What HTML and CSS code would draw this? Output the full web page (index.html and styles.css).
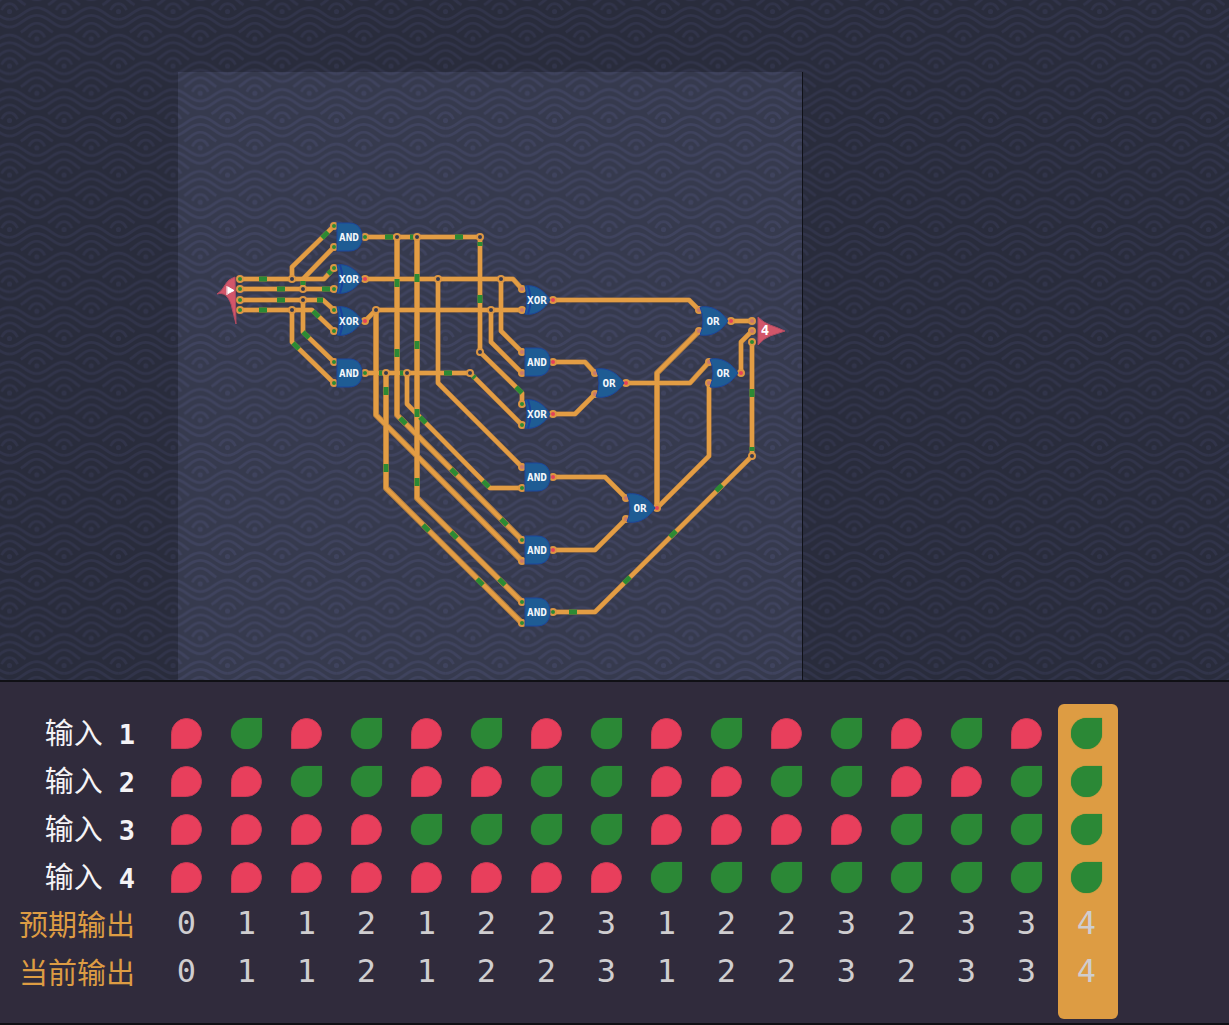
FILE: index.html
```html
<!DOCTYPE html>
<html lang="zh-CN">
<head>
<meta charset="utf-8">
<meta name="viewport" content="width=device-width, initial-scale=1">
<title>电路</title>
<link rel="stylesheet" href="styles.css">
</head>
<body>
<svg class="stage" role="img" aria-label="电路图">
  <defs>
    <g id="waves" fill="none" stroke-width="2.700">
      <circle r="1.2"/>
      <path d="M-8-1.5Q-5-7.8 0-7.8T8-1.5"/>
      <path d="M-16-6.5C-10-10-7-15.6 0-15.6S10-10 16-6.5"/>
      <path d="M-27.3-19.4C-16-19.4-12-31.1 0-31.1S16-19.4 27.3-19.4"/>
      <path d="M-27.3-11.7C-16-11.7-12-23.4 0-23.4S16-11.7 27.3-11.7"/>
    </g>
    <g id="tile">
      <use href="#waves"/><use href="#waves" x="54.5"/>
      <use href="#waves" y="54.5"/><use href="#waves" x="54.5" y="54.5"/>
      <use href="#waves" x="27.25" y="27.25"/><use href="#waves" x="27.25" y="81.75"/>
    </g>
    <pattern id="sea-dark" x="200.3" y="93.3" width="54.5" height="54.5" patternUnits="userSpaceOnUse">
      <use href="#tile" class="sea-dark"/>
    </pattern>
    <pattern id="sea-light" x="200.3" y="93.3" width="54.5" height="54.5" patternUnits="userSpaceOnUse">
      <use href="#tile" class="sea-light"/>
    </pattern>
    <g id="AND"><path class="gate" d="M-12-14H0C9-14 13-8 13 0S9 14 0 14H-12Z"/></g>
    <g id="XOR"><path class="gate" d="M-12-14C-2-16 8-9 13 0C8 9-2 16-12 14Q-8 0-12-14Z"/><path class="gate-bar" d="M-9-14Q-4 0-9 14"/></g>
    <g id="OR"><path class="gate" d="M-13-14C0-16 9-9 15 0C9 9 0 16-13 14Q-7 0-13-14Z"/></g>
  </defs>

  <rect class="ground" width="100%" height="100%"/>
  <rect fill="url(#sea-dark)" width="100%" height="100%"/>
  <rect class="board" x="178" y="72" width="624" height="100%"/>
  <rect fill="url(#sea-light)" x="178" y="72" width="624" height="100%"/>
  <rect class="board-edge" x="802" y="72" width="1" height="100%"/>

  <g id="wires"></g>
  <g id="pulses"></g>
  <g id="ports"></g>
  <g id="gates"></g>

  <path class="terminal" d="M217 294Q222 291 225 285T235 277L236 324Q233 312 231 304C228 296 224 292 217 294Z"/>
  <path class="flag" d="M227 286V295M228 287L234 290.500L228 293.500Z"/>
  <path class="terminal" d="M758 317Q764 323 770 325T785 331Q776 334 770 336T758 345Z"/>
  <text class="terminal-text" x="765" y="335">4</text>
</svg>

<main class="panel">
  <table class="truth">
    <colgroup><col class="col-name"><col span="16" class="col-value"></colgroup>
    <tbody id="rows"></tbody>
  </table>
</main>
<script src="script.js"></script>
</body>
</html>
```
FILE: styles.css
```css
* { box-sizing: border-box; }

body {
  margin: 0;
  min-height: 100vh;
  display: flex;
  flex-direction: column;
  background: #302b3c;
  font-family: "Noto Sans CJK SC", sans-serif;
}

/* circuit canvas */
.stage {
  display: block;
  flex: 1 0 640px;
  width: 100%;
}
.ground { fill: #292c3c; }
.sea-dark { stroke: #31344a; }
.board { fill: #363a4e; }
.sea-light { stroke: #3f435e; }
.board-edge { fill: #101118; }

.wire-edge, .wire, .pulse { fill: none; stroke-linejoin: round; }
.wire-edge { stroke: #b57f3f; stroke-width: 5; }
.wire { stroke: #e39d44; stroke-width: 4; }
.wire-edge.trunk { stroke-width: 6; }
.pulse { stroke: #2c8a34; stroke-width: 5; }

.port { stroke: #dc9643; stroke-width: 2; }
.port-on { fill: #2c8a34; }
.port-off { fill: #e4405a; }
.port-dim { fill: #c8786c; }
.port-joint { fill: #363a4e; }

.gate { fill: #1e5c94; stroke: #1d459a; stroke-width: 1; }
.gate-bar { fill: none; stroke: #1a419b; stroke-width: 2; }
.gate-text {
  fill: #f2f6fa;
  font: bold 11px "DejaVu Sans Mono", monospace;
  text-anchor: middle;
}
.terminal { fill: #d2566a; stroke: #b24b62; stroke-width: 1; }
.terminal-text {
  fill: #fff;
  font: bold 14px "DejaVu Sans Mono", monospace;
  text-anchor: middle;
}
.flag { fill: #fff; stroke: #fff; stroke-width: 1; }

/* truth table */
.panel {
  border-top: 2px solid #101015;
  border-bottom: 2px solid #101015;
  padding: 22px 0 4px;
  overflow-x: auto;
}
.truth {
  table-layout: fixed;
  width: 1118px;
  border-spacing: 0;
}
.col-name { width: 158px; }
.col-value { width: 60px; }

.truth th, .truth td {
  height: 48px;
  padding: 0;
  line-height: 44px;
}
.truth th {
  padding: 0 23px 4px 0;
  text-align: right;
  white-space: nowrap;
  font-weight: 400;
  font-size: 29px;
  color: #f4f3f6;
}
.truth .result th { color: #dd9c43; }
.truth .index {
  margin-left: 16px;
  font: bold 27px "DejaVu Sans Mono", monospace;
}
.truth td {
  padding-right: 3px;
  text-align: center;
  vertical-align: middle;
  font-family: "DejaVu Sans Mono", monospace;
  font-size: 32px;
  color: #cfcdcf;
}
.truth .result td { padding-bottom: 4px; }
.truth tr:first-child > * { height: 53px; padding-top: 5px; }
.truth tr:last-child > * { height: 70px; padding-bottom: 26px; }

.truth .active { background: #dd9c43; }
.truth tr:first-child .active { border-radius: 6px 6px 0 0; }
.truth tr:last-child .active { border-radius: 0 0 6px 6px; }

.leaf {
  display: block;
  width: 31px;
  height: 31px;
  margin: 0 auto;
}
.leaf-off {
  background: #e83f5c;
  border: 1px solid #c93a55;
  border-radius: 50% 50% 50% 0;
}
.leaf-on {
  background: #2b8836;
  border-radius: 50% 0 50% 50%;
  box-shadow: 0 0 1px #2b8836;
}
```
FILE: script.js
```js
const SVG = "http://www.w3.org/2000/svg";
function add(parentId, tag, attrs, text) {
  const el = document.createElementNS(SVG, tag);
  for (const k in attrs) el.setAttribute(k, attrs[k]);
  if (text) el.textContent = text;
  document.getElementById(parentId).appendChild(el);
}

const wires = [
  "240,279 324,279 334,268", "292,279 292,267 334,226", "303,289 303,279 334,247",
  "240,289 334,289", "240,300 323,300 334,310", "240,310 312,310 334,331",
  "303,300 303,332 334,362", "292,310 292,342 334,383",
  "365,237 480,237 480,352 522,393 522,404", "365,279 513,279 522,289",
  "501,279 501,331 522,352", "365,321 376,310 522,310", "491,310 491,342 522,373",
  "365,373 470,373 522,425", "438,279 438,383 522,467",
  "407,373 407,404 490,488 522,488", "553,300 689,300 699,310", "731,321 752,321",
  "553,362 585,362 595,373", "553,414 575,414 595,394", "626,383 690,383 709,362",
  "741,373 741,342 752,331", "553,477 605,477 626,498", "553,550 595,550 626,519",
  "657,508 709,456 709,383", "553,612 595,612 752,456 752,342"
];
const trunks = [
  "397,237 397,415 522,540", "417,237 417,498 522,602", "376,310 376,415 522,561",
  "386,373 386,488 522,623", "657,508 657,373 699,331"
];
for (const kind of ["wire-edge", "wire"]) {
  for (const points of wires) add("wires", "polyline", { class: kind, points });
  for (const points of trunks) add("wires", "polyline", { class: kind + " trunk", points });
}

// signal pulses travelling along a wire: x, y, direction x, direction y, half length
const pulses = [
  [263,279,1,0,4],[281,289,1,0,4],[281,300,1,0,4],[263,310,1,0,4],[326,289,1,0,4],
  [320,300,1,0,3],[389,237,1,0,4],[412,237,1,0,2],[459,237,1,0,4],[448,373,1,0,4],
  [381,373,1,0,2],[402,373,1,0,2],[573,612,1,0,4],
  [303,283,0,1,2],[480,244,0,1,2],[480,299,0,1,4],[397,283,0,1,4],[397,353,0,1,4],
  [417,278,0,1,4],[417,345,0,1,4],[386,391,0,1,4],[386,468,0,1,4],[417,482,0,1,4],
  [417,413,0,1,4],[752,393,0,1,4],[752,449,0,1,2],
  [316,314,1,1,3],[306,335,1,1,3],[296,346,1,1,3],[403,421,1,1,3],[423,420,1,1,3],
  [474,377,1,1,1],[519,390,1,1,3],[454,472,1,1,3],[486,484,1,1,3],[504,522,1,1,3],
  [426,528,1,1,3],[454,535,1,1,3],[480,582,1,1,3],[502,582,1,1,3],
  [325,235,1,-1,3],[330,272,1,-1,2],[719,488,1,-1,3],[673,534,1,-1,3],[627,580,1,-1,3]
];
for (const [x, y, dx, dy, n] of pulses)
  add("pulses", "path", { class: "pulse", d: `M${x - dx * n} ${y - dy * n}L${x + dx * n} ${y + dy * n}` });

const ports = {
  joint: [[292,279],[303,289],[303,300],[292,310],[397,237],[417,237],[480,237],[438,279],
    [501,279],[376,310],[491,310],[386,373],[407,373],[470,373],[480,352],[752,456]],
  on: [[240,279],[240,289],[240,300],[240,310],[334,226],[334,247],[334,268],[334,289],
    [334,310],[334,331],[334,362],[334,383],[365,237],[365,373],[522,404],[522,425],
    [522,488],[522,540],[522,602],[522,623],[553,612],[752,342]],
  off: [[365,279],[365,321],[553,300],[553,362],[553,414],[553,477],[553,550],[626,383],
    [657,508],[731,321],[741,373]],
  dim: [[522,289],[522,310],[522,352],[522,373],[522,467],[522,561],[595,373],[595,394],
    [626,498],[626,519],[699,310],[699,331],[709,362],[709,383],[752,321],[752,331]]
};
for (const kind in ports)
  for (const [cx, cy] of ports[kind]) add("ports", "circle", { class: "port port-" + kind, cx, cy, r: 3 });

const gates = [
  ["AND",349,237],["XOR",349,279],["XOR",349,321],["AND",349,373],["XOR",537,300],
  ["AND",537,362],["XOR",537,414],["AND",537,477],["AND",537,550],["AND",537,612],
  ["OR",609,383],["OR",713,321],["OR",723,373],["OR",640,508]
];
for (const [kind, x, y] of gates) {
  add("gates", "use", { href: "#" + kind, x, y });
  add("gates", "text", { class: "gate-text", x, y: y + 4 }, kind);
}

// truth table: input n is bit n of the case number, output is the count of set bits
const cases = [...Array(16).keys()];
const cell = (n, body) => `<td${n === 15 ? ' class="active"' : ""}>${body}</td>`;
const leaf = on => `<span class="leaf leaf-${on ? "on" : "off"}" role="img" aria-label="${on ? "开" : "关"}"></span>`;
const count = n => n.toString(2).replace(/0/g, "").length;
let html = "";
for (let bit = 0; bit < 4; bit++)
  html += `<tr><th scope="row">输入<span class="index">${bit + 1}</span></th>` +
    cases.map(n => cell(n, leaf(n >> bit & 1))).join("") + "</tr>";
for (const name of ["预期输出", "当前输出"])
  html += `<tr class="result"><th scope="row">${name}</th>` + cases.map(n => cell(n, count(n))).join("") + "</tr>";
document.getElementById("rows").innerHTML = html;
```
